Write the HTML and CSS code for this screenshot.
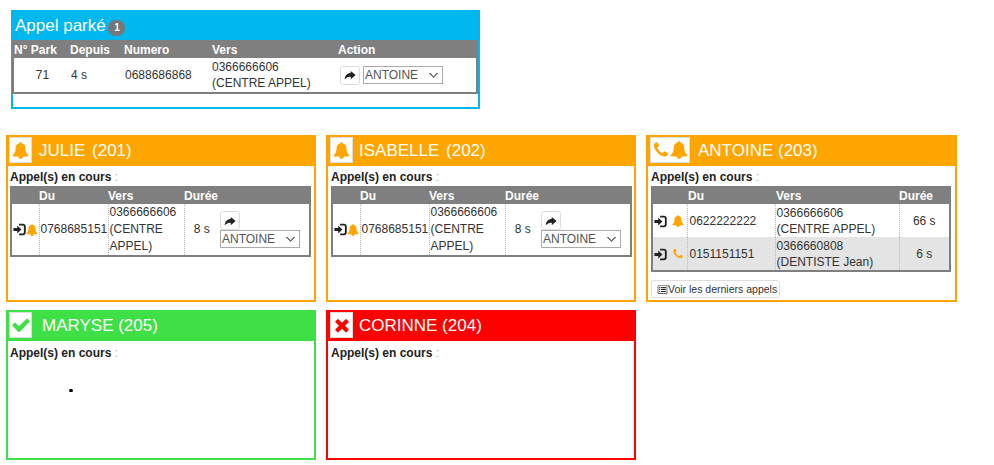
FILE: index.html
```html
<!DOCTYPE html>
<html>
<head>
    <meta charset="UTF-8">
    <title>Supervision des appels</title>
    <link rel="stylesheet" href="styles.css">
</head>
<body>
    <svg class="defs" width="0" height="0">
        <symbol id="i-bell" viewBox="0 0 1792 1792"><path d="M912 1696q0-16-16-16-59 0-101.5-42.5t-42.5-101.5q0-16-16-16t-16 16q0 73 51.5 124.5t124.5 51.5q16 0 16-16zm816-288q0 52-38 90t-90 38h-448q0 106-75 181t-181 75-181-75-75-181h-448q-52 0-90-38t-38-90q50-42 91-88t85-119.5 74.5-158.5 50-206 19.5-260q0-152 117-282.5t307-158.5q-8-19-8-39 0-40 28-68t68-28 68 28 28 68q0 20-8 39 190 28 307 158.5t117 282.5q0 139 19.5 260t50 206 74.5 158.5 85 119.5 91 88z"/></symbol>
        <symbol id="i-phone" viewBox="0 0 1792 1792"><path d="M1600 1240q0 27-10 70.5t-21 68.5q-21 50-122 106-94 51-186 51-27 0-53-3.5t-57.5-12.5-47-14.5-55.5-20.5-49-18q-98-35-175-83-127-79-264-216t-216-264q-48-77-83-175-3-9-18-49t-20.5-55.5-14.5-47-12.5-57.5-3.5-53q0-92 51-186 56-101 106-122 25-11 68.5-21t70.5-10q14 0 21 3 18 6 53 76 11 19 30 54t35 63.5 31 53.5q3 4 17.5 25t21.5 35.5 7 28.5q0 20-28.5 50t-62 55-62 53-28.5 46q0 9 5 22.5t8.5 20.5 14 24 11.5 19q76 137 174 235t235 174q2 1 19 11.5t24 14 20.5 8.5 22.5 5q18 0 46-28.5t53-62 55-62 50-28.5q14 0 28.5 7t35.5 21.5 25 17.5q25 15 53.5 31t63.5 35 54 30q70 35 76 53 3 7 3 21z"/></symbol>
        <symbol id="i-check" viewBox="0 0 1792 1792"><path d="M1671 566q0 40-28 68l-724 724-136 136q-28 28-68 28t-68-28l-136-136-362-362q-28-28-28-68t28-68l136-136q28-28 68-28t68 28l294 295 656-657q28-28 68-28t68 28l136 136q28 28 28 68z"/></symbol>
        <symbol id="i-times" viewBox="0 0 1792 1792"><path d="M1490 1322q0 40-28 68l-136 136q-28 28-68 28t-68-28l-294-294-294 294q-28 28-68 28t-68-28l-136-136q-28-28-28-68t28-68l294-294-294-294q-28-28-28-68t28-68l136-136q28-28 68-28t68 28l294 294 294-294q28-28 68-28t68 28l136 136q28 28 28 68t-28 68l-294 294 294 294q28 28 28 68z"/></symbol>
        <symbol id="i-share" viewBox="0 0 16 16"><path d="M9 2.5 15.5 8 9 13.5V10.2C5.5 10 3 11 1 14 1 8.5 4.5 5.5 9 5z"/></symbol>
        <symbol id="i-login" viewBox="0 0 16 16"><path d="M0.5 6.2H5.2V3.2L10.4 8 5.2 12.8V9.8H0.5z"/><path d="M7.5 1H12.3C14.2 1 15.7 2.4 15.7 4.3V11.7C15.7 13.6 14.2 15 12.3 15H7.5V12.8H12C13 12.8 13.4 12.2 13.4 11.5V4.5C13.4 3.8 13 3.2 12 3.2H7.5z"/></symbol>
        <symbol id="i-list" viewBox="0 0 16 16"><path fill-rule="evenodd" d="M1 2H15V14H1zM2 3V13H14V3zM3 4.5H4.5V6H3zM5.5 4.5H13V6H5.5zM3 7.2H4.5V8.7H3zM5.5 7.2H13V8.7H5.5zM3 10H4.5V11.5H3zM5.5 10H13V11.5H5.5z"/></symbol>
    </svg>

    <div class="parked">
        <h3 class="parked-title">Appel parké <span class="badge">1</span></h3>
        <table class="calls parked-table">
            <colgroup><col class="p1"><col class="p2"><col class="p3"><col class="p4"><col></colgroup>
            <tr><th>N° Park</th><th>Depuis</th><th>Numero</th><th>Vers</th><th>Action</th></tr>
            <tr>
                <td class="num">71</td>
                <td>4 s</td>
                <td>0688686868</td>
                <td class="flush">0366666606<br>(CENTRE APPEL)</td>
                <td>
                    <div class="action-line">
                        <button class="btn-send"><svg class="ico"><use href="#i-share"/></svg></button>
                        <select class="dest"><option>ANTOINE</option></select>
                    </div>
                </td>
            </tr>
        </table>
    </div>

    <div class="cards">
        <div class="card ringing">
            <div class="card-head">
                <span class="state"><svg class="state-ico"><use href="#i-bell"/></svg></span>
                <span class="name name-gap">JULIE (201)</span>
            </div>
            <div class="card-body">
                <div class="label"><b>Appel(s) en cours</b> :</div>
                <table class="calls incoming">
                    <colgroup><col class="c1"><col class="c2"><col class="c3"><col class="c4"><col></colgroup>
                    <tr><th></th><th>Du</th><th>Vers</th><th>Durée</th><th></th></tr>
                    <tr>
                        <td class="dir"><svg class="ico ico-in"><use href="#i-login"/></svg><svg class="ico orange"><use href="#i-bell"/></svg></td>
                        <td>0768685151</td>
                        <td>0366666606 (CENTRE APPEL)</td>
                        <td class="time">8 s</td>
                        <td class="stack">
                            <button class="btn-send"><svg class="ico"><use href="#i-share"/></svg></button>
                            <select class="dest"><option>ANTOINE</option></select>
                        </td>
                    </tr>
                </table>
            </div>
        </div>

        <div class="card ringing inset">
            <div class="card-head">
                <span class="state"><svg class="state-ico"><use href="#i-bell"/></svg></span>
                <span class="name name-gap">ISABELLE (202)</span>
            </div>
            <div class="card-body">
                <div class="label"><b>Appel(s) en cours</b> :</div>
                <table class="calls incoming">
                    <colgroup><col class="c1"><col class="c2"><col class="c3"><col class="c4"><col></colgroup>
                    <tr><th></th><th>Du</th><th>Vers</th><th>Durée</th><th></th></tr>
                    <tr>
                        <td class="dir"><svg class="ico ico-in"><use href="#i-login"/></svg><svg class="ico orange"><use href="#i-bell"/></svg></td>
                        <td>0768685151</td>
                        <td>0366666606 (CENTRE APPEL)</td>
                        <td class="time">8 s</td>
                        <td class="stack">
                            <button class="btn-send"><svg class="ico"><use href="#i-share"/></svg></button>
                            <select class="dest"><option>ANTOINE</option></select>
                        </td>
                    </tr>
                </table>
            </div>
        </div>

        <div class="card ringing wide">
            <div class="card-head">
                <span class="state state-double"><svg class="state-ico"><use href="#i-phone"/></svg><svg class="state-ico"><use href="#i-bell"/></svg></span>
                <span class="name">ANTOINE (203)</span>
            </div>
            <div class="card-body">
                <div class="label"><b>Appel(s) en cours</b> :</div>
                <table class="calls active">
                    <colgroup><col class="a1"><col class="a2"><col class="a3"><col></colgroup>
                    <tr><th></th><th>Du</th><th>Vers</th><th>Durée</th></tr>
                    <tr>
                        <td class="dir"><svg class="ico ico-in"><use href="#i-login"/></svg><svg class="ico orange spaced"><use href="#i-bell"/></svg></td>
                        <td>0622222222</td>
                        <td>0366666606<br>(CENTRE APPEL)</td>
                        <td class="time">66 s</td>
                    </tr>
                    <tr class="alt">
                        <td class="dir"><svg class="ico ico-in"><use href="#i-login"/></svg><svg class="ico orange spaced"><use href="#i-phone"/></svg></td>
                        <td>0151151151</td>
                        <td>0366660808<br>(DENTISTE Jean)</td>
                        <td class="time">6 s</td>
                    </tr>
                </table>
                <button class="btn-history"><svg class="ico-list"><use href="#i-list"/></svg>Voir les derniers appels</button>
            </div>
        </div>

        <div class="card free low">
            <div class="card-head">
                <span class="state"><svg class="state-ico"><use href="#i-check"/></svg></span>
                <span class="name name-free">MARYSE (205)</span>
            </div>
            <div class="card-body">
                <div class="label"><b>Appel(s) en cours</b> :</div>
                <span class="dot"></span>
            </div>
        </div>

        <div class="card off low inset">
            <div class="card-head">
                <span class="state"><svg class="state-ico"><use href="#i-times"/></svg></span>
                <span class="name">CORINNE (204)</span>
            </div>
            <div class="card-body">
                <div class="label"><b>Appel(s) en cours</b> :</div>
            </div>
        </div>
    </div>
</body>
</html>
```

FILE: styles.css
```css
body {
    margin: 0;
    font-family: "Liberation Sans", Arial, sans-serif;
    font-size: 12px;
    line-height: 17px;
    color: #333;
    background-color: #fff;
}

.defs {
    display: block;
    height: 0;
}

.parked {
    box-sizing: border-box;
    width: 469px;
    height: 99px;
    margin: 10px 0 0 11px;
    border: 2px solid #00b7ee;
    border-top: 0;
}

.parked-title {
    margin: 0 -1px;
    height: 30px;
    padding: 3px 0 0 3px;
    box-sizing: border-box;
    background-color: #00b7ee;
    color: #fff;
    font-size: 17px;
    font-weight: normal;
    line-height: 26px;
}

.badge {
    display: inline-block;
    width: 17px;
    height: 16px;
    margin-left: -2px;
    border-radius: 8px;
    background-color: #777;
    color: #fff;
    font-size: 10px;
    font-weight: bold;
    line-height: 16px;
    text-align: center;
    vertical-align: 0;
}

.calls {
    border-collapse: collapse;
    table-layout: fixed;
    box-sizing: border-box;
    border: 2px solid #7f7f7f;
    background-color: #fff;
}

.calls th {
    height: 16px;
    padding: 0;
    background-color: #7f7f7f;
    color: #fff;
    font-size: 12px;
    font-weight: bold;
    text-align: left;
    line-height: 16px;
}

.calls td {
    padding: 0 0 0 1px;
    vertical-align: middle;
}

.parked-table {
    width: 466px;
    margin-left: -1px;
}

.p1 { width: 57px; }
.p2 { width: 54px; }
.p3 { width: 88px; }
.p4 { width: 126px; }

.parked-table td {
    height: 34px;
    line-height: 16px;
}

.parked-table td.flush {
    padding-left: 0;
}

.parked-table .action-line {
    margin-left: 1px;
}

.num {
    text-align: center;
}

.action-line {
    display: flex;
    align-items: center;
    gap: 3px;
}

.btn-send {
    display: flex;
    align-items: center;
    justify-content: center;
    box-sizing: border-box;
    width: 20px;
    height: 19px;
    padding: 0;
    border: 1px solid #ddd;
    border-radius: 3px;
    background-color: #fff;
}

.dest {
    appearance: none;
    box-sizing: border-box;
    width: 80px;
    height: 18px;
    padding: 0 0 0 1px;
    border: 1px solid #aaa;
    border-radius: 0;
    background-color: #fff;
    background-image: linear-gradient(45deg, transparent 42%, #777 42%, #777 62%, transparent 62%), linear-gradient(-45deg, transparent 42%, #777 42%, #777 62%, transparent 62%);
    background-position: right 8px center, right 4px center;
    background-size: 5px 5px;
    background-repeat: no-repeat;
    color: #555;
    font-family: inherit;
    font-size: 12px;
}

.ico {
    width: 12px;
    height: 12px;
    fill: #222;
    flex: none;
}

.ico-in {
    width: 13px;
    height: 13px;
}

.orange {
    fill: #ffa500;
}

.spaced {
    margin-left: 5px;
}

.cards {
    display: flex;
    flex-wrap: wrap;
    gap: 8px 10px;
    width: 960px;
    margin: 26px 0 0 6px;
}

.card {
    box-sizing: border-box;
    display: flex;
    flex-direction: column;
    width: 310px;
    height: 167px;
    border: 2px solid #ffa500;
}

.wide {
    width: 311px;
}

.low {
    height: 150px;
}

.ringing { border-color: #ffa500; }
.free { border-color: #3fe046; }
.off { border-color: #f00; }

.card-head {
    display: flex;
    align-items: flex-start;
    height: 29px;
    flex: none;
    color: #fff;
    font-size: 17px;
    line-height: 28px;
}

.ringing .card-head { background-color: #ffa500; }
.free .card-head { background-color: #3fe046; }
.off .card-head { background-color: #f00; }

.state {
    display: flex;
    align-items: center;
    justify-content: center;
    box-sizing: border-box;
    width: 23px;
    height: 26px;
    margin: 0 7px 0 1px;
    border: 1px solid #ddd;
    background-color: #fff;
}

.state-double {
    width: 40px;
    margin-right: 8px;
    margin-left: 2px;
}

.state-ico {
    width: 17px;
    height: 17px;
    flex: none;
}

.ringing .state-ico { fill: #ffa500; }
.free .state-ico { fill: #3fe046; width: 20px; height: 20px; }
.off .state-ico { fill: #f00; width: 20px; height: 20px; }

.state-double .state-ico {
    width: 18px;
    height: 18px;
}

.name-free {
    margin-left: 3px;
}

.name-gap {
    word-spacing: 2px;
}

.card-body {
    position: relative;
    flex: 1;
    padding: 3px 2px 0;
}

.low .card-body {
    padding-top: 4px;
}

.inset .card-body {
    padding-left: 3px;
}

.inset .state {
    margin: 0 6px 0 2px;
}

.wide .card-body {
    padding-left: 3px;
}

.label {
    height: 17px;
    color: #aaa;
}

.label b {
    color: #222;
}

.incoming {
    width: 301px;
}

.incoming td {
    border-left: 1px dotted #bbb;
    line-height: 17px;
}

.incoming td:first-child,
.incoming td:last-child {
    border-left: 0;
}

.c1 { width: 28px; }
.c2 { width: 69px; }
.c3 { width: 76px; }
.c4 { width: 35px; }

.dir {
    white-space: nowrap;
}

.calls td.dir {
    padding-left: 1px;
}

.dir .ico {
    vertical-align: middle;
}

.calls td.time {
    padding: 0;
    text-align: center;
}

.calls td.stack {
    padding-left: 1px;
}

.stack .dest {
    display: block;
}

.active {
    width: 300px;
}

.active th {
    padding-left: 1px;
}

.calls.active th:last-child {
    padding-left: 0;
}

.active td {
    height: 33px;
    line-height: 16px;
    border-left: 1px dotted #bbb;
}

.active td:first-child {
    border-left: 0;
}

.active td:nth-child(2) {
    padding-left: 2px;
}

.alt td {
    background-color: #e4e4e4;
}

.a1 { width: 35px; }
.a2 { width: 88px; }
.a3 { width: 124px; }

.btn-history {
    display: flex;
    align-items: center;
    box-sizing: border-box;
    width: 129px;
    height: 18px;
    margin-top: 8px;
    padding: 0 0 0 5px;
    border: 1px solid #ddd;
    border-radius: 3px;
    background-color: #fff;
    color: #333;
    font-family: inherit;
    font-size: 10.5px;
    white-space: nowrap;
}

.ico-list {
    width: 11px;
    height: 11px;
    flex: none;
    fill: #333;
}

.dot {
    position: absolute;
    left: 61px;
    top: 48px;
    width: 4px;
    height: 3px;
    border-radius: 2px;
    background-color: #000;
}
```
